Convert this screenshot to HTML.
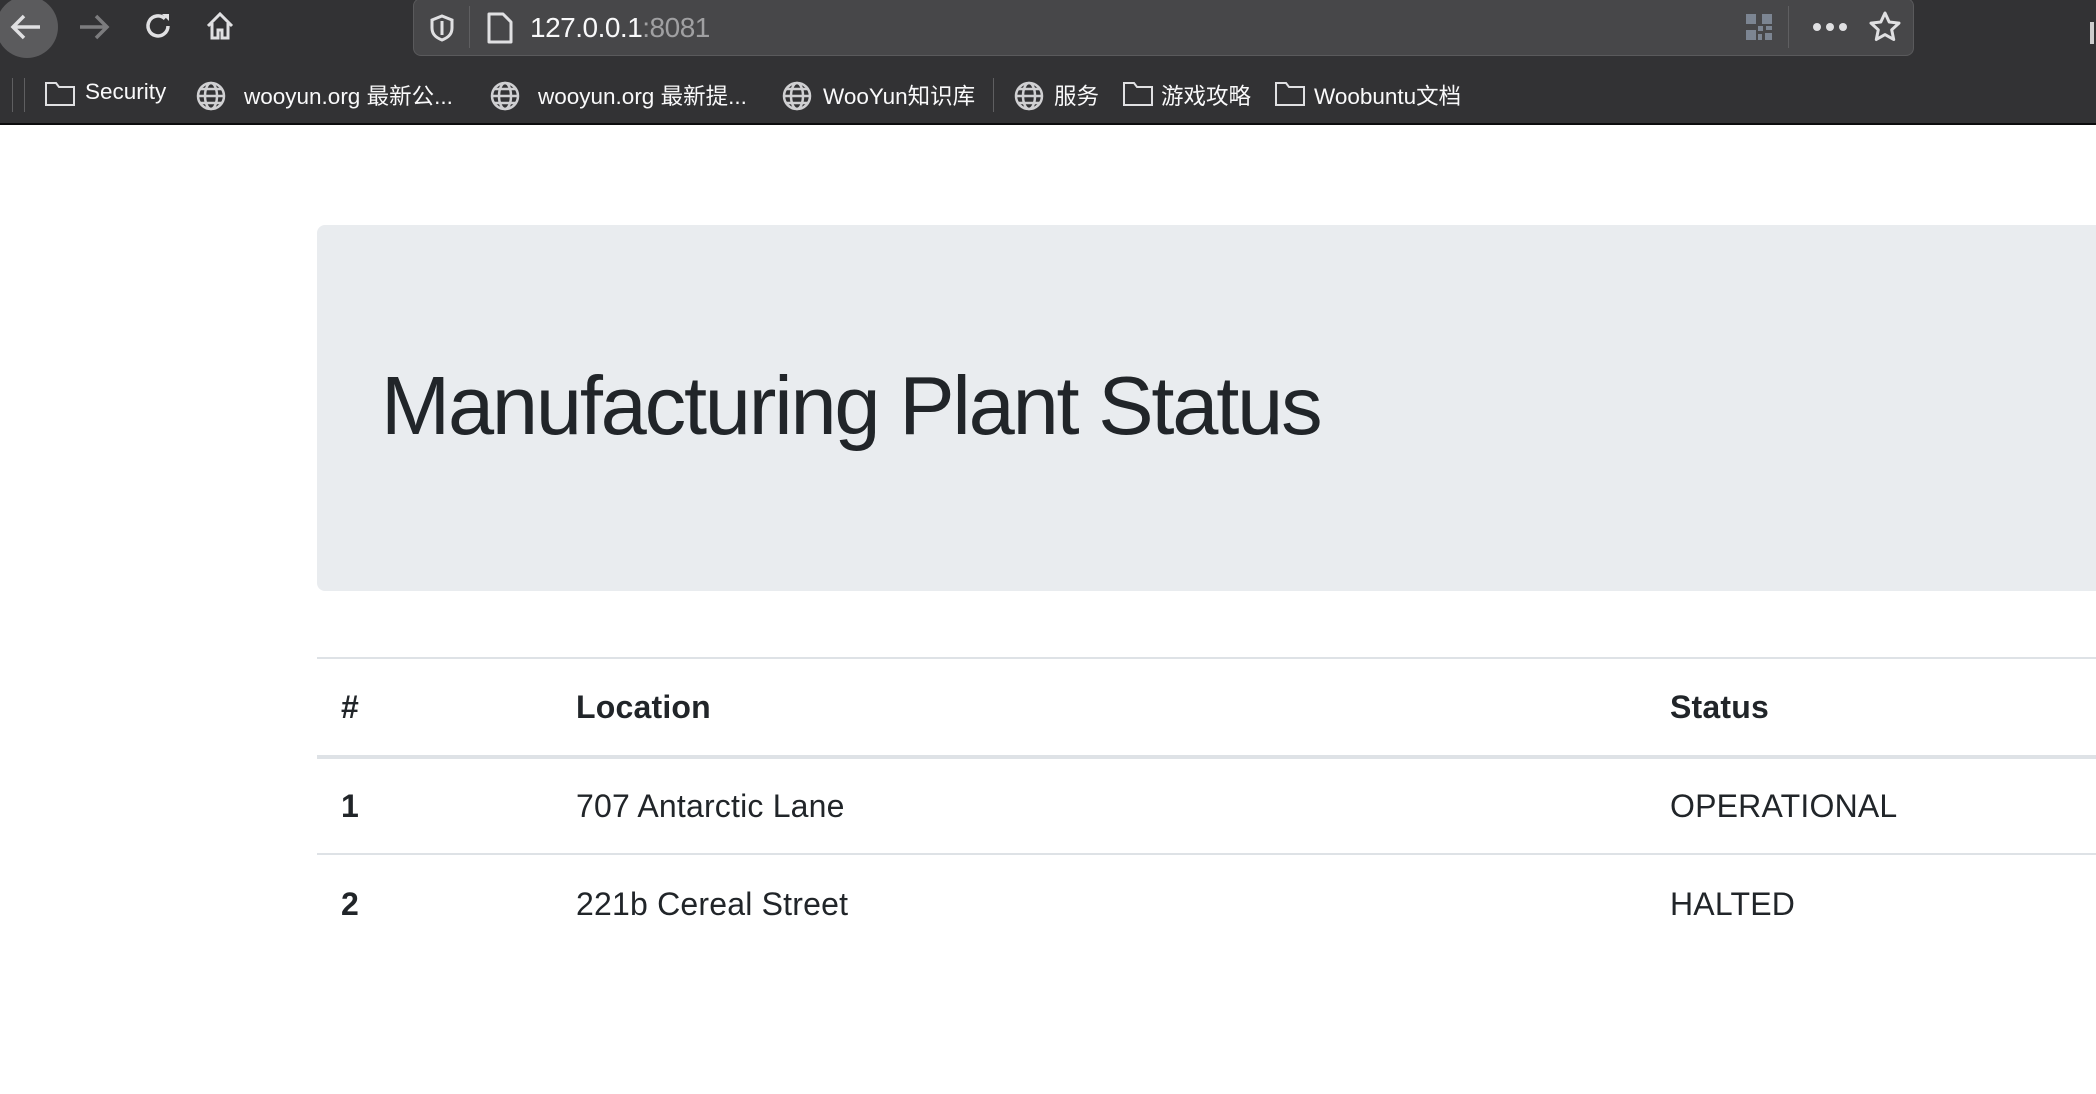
<!DOCTYPE html>
<html><head><meta charset="utf-8"><style>
*{margin:0;padding:0;box-sizing:border-box}
body{width:2096px;height:1094px;overflow:hidden;background:#fff;font-family:"Liberation Sans","Noto Sans CJK SC",sans-serif;color:#212529;position:relative}
.tb{position:absolute;left:0;top:0;width:2096px;height:123px;background:#323234}
.line{position:absolute;left:0;top:123px;width:2096px;height:2px;background:#0c0c0d}
.url{position:absolute;left:413px;top:-2px;width:1501px;height:58px;background:#474749;border:1px solid #5a5a5c;border-radius:8px}
.bm{position:absolute;top:79px;color:#f9f9fa;font-size:22.5px;white-space:nowrap}
.ic{position:absolute;color:#d0d0d2}
.jt{position:absolute;left:317px;top:225px;width:1800px;height:366px;background:#e9ecef;border-radius:8px}
h1{position:absolute;left:381px;top:356px;font-size:83px;font-weight:500;letter-spacing:-2.2px;line-height:100px;white-space:nowrap}
.hr{position:absolute;left:317px;width:1800px;background:#dee2e6}
.t{position:absolute;font-size:32px;line-height:40px;white-space:nowrap;letter-spacing:0.2px}
.b{font-weight:bold}
</style></head><body>
<div class="tb"></div><div class="line"></div>
<div style="position:absolute;left:-4px;top:-4px;width:62px;height:62px;border-radius:50%;background:#5b5b5d"></div>
<svg class="ic" style="left:8px;top:12px" width="36" height="30" viewBox="0 0 36 30"><path d="M32 15H6M16 4L5 15l11 11" stroke="#e0e0e2" stroke-width="3.5" fill="none"/></svg>
<svg class="ic" style="left:76px;top:12px" width="36" height="30" viewBox="0 0 36 30"><path d="M4 15h26M20 4l11 11-11 11" stroke="#7c7c7e" stroke-width="3.5" fill="none"/></svg>
<svg class="ic" style="left:142px;top:10px" width="32" height="32" viewBox="0 0 32 32"><path d="M26 16a10 10 0 1 1-3-7.2" stroke="#e0e0e2" stroke-width="3.5" fill="none"/><path d="M20 4h7v7z" fill="#e0e0e2"/></svg>
<svg class="ic" style="left:204px;top:10px" width="32" height="32" viewBox="0 0 32 32"><path d="M4 16L16 4l12 12M8 13v15h6v-8h4v8h6V13" stroke="#e0e0e2" stroke-width="3" fill="none"/></svg>
<div class="url"></div>
<svg style="position:absolute;left:428px;top:14px" width="28" height="28" viewBox="0 0 28 28"><path d="M14 2l10 4v8c0 7-5 10-10 12C9 24 4 21 4 14V6z" stroke="#e0e0e2" stroke-width="3" fill="none"/><path d="M14 7v14" stroke="#e0e0e2" stroke-width="3"/></svg>
<div style="position:absolute;left:469px;top:6px;width:1px;height:42px;background:#5f5f61"></div>
<svg style="position:absolute;left:486px;top:11px" width="28" height="34" viewBox="0 0 28 34"><path d="M3 3h14l8 8v20H3z" stroke="#e0e0e2" stroke-width="3" fill="none" stroke-linejoin="round"/></svg>
<div style="position:absolute;left:530px;top:12px;font-size:28px;color:#f9f9fa;letter-spacing:-0.5px">127.0.0.1<span style="color:#a0a0a2">:8081</span></div>
<svg style="position:absolute;left:1746px;top:14px" width="26" height="26" viewBox="0 0 26 26" fill="#7c8592"><rect x="0" y="0" width="10" height="10"/><rect x="16" y="0" width="10" height="10"/><rect x="0" y="16" width="10" height="10"/><rect x="12" y="12" width="5" height="5"/><rect x="19" y="19" width="7" height="7"/><rect x="12" y="20" width="4" height="6"/><rect x="20" y="12" width="6" height="4"/></svg>
<div style="position:absolute;left:1788px;top:6px;width:1px;height:42px;background:#5f5f61"></div>
<svg style="position:absolute;left:1812px;top:22px" width="36" height="10" viewBox="0 0 36 10" fill="#e0e0e2"><circle cx="5" cy="5" r="4"/><circle cx="18" cy="5" r="4"/><circle cx="31" cy="5" r="4"/></svg>
<svg style="position:absolute;left:1868px;top:10px" width="34" height="34" viewBox="0 0 34 34"><path d="M17 3l4.2 9 9.8 1.1-7.3 6.7 2 9.7L17 24.6l-8.7 4.9 2-9.7L3 13.1l9.8-1.1z" stroke="#e0e0e2" stroke-width="3" fill="none" stroke-linejoin="round"/></svg>
<div style="position:absolute;left:12px;top:78px;width:1px;height:34px;background:#5f5f61"></div>
<div style="position:absolute;left:24px;top:78px;width:1px;height:34px;background:#5f5f61"></div>
<div style="position:absolute;left:993px;top:78px;width:1px;height:34px;background:#5f5f61"></div>
<svg style="position:absolute;left:44px;top:81px" width="32" height="26" viewBox="0 0 32 26"><path d="M2 2h10l3 4h15v18H2z" stroke="#e0e0e2" stroke-width="2" fill="none"/></svg>
<div class="bm" style="left:85px">Security</div>
<svg style="position:absolute;left:195px;top:80px" width="32" height="32" viewBox="0 0 32 32" fill="none" stroke="#d0d0d2" stroke-width="2.5"><circle cx="16" cy="16" r="13"/><ellipse cx="16" cy="16" rx="6" ry="13"/><path d="M3 16h26M5 9h22M5 23h22"/></svg>
<div class="bm" style="left:244px">wooyun.org 最新公...</div>
<svg style="position:absolute;left:489px;top:80px" width="32" height="32" viewBox="0 0 32 32" fill="none" stroke="#d0d0d2" stroke-width="2.5"><circle cx="16" cy="16" r="13"/><ellipse cx="16" cy="16" rx="6" ry="13"/><path d="M3 16h26M5 9h22M5 23h22"/></svg>
<div class="bm" style="left:538px">wooyun.org 最新提...</div>
<svg style="position:absolute;left:781px;top:80px" width="32" height="32" viewBox="0 0 32 32" fill="none" stroke="#d0d0d2" stroke-width="2.5"><circle cx="16" cy="16" r="13"/><ellipse cx="16" cy="16" rx="6" ry="13"/><path d="M3 16h26M5 9h22M5 23h22"/></svg>
<div class="bm" style="left:823px">WooYun知识库</div>
<svg style="position:absolute;left:1013px;top:80px" width="32" height="32" viewBox="0 0 32 32" fill="none" stroke="#d0d0d2" stroke-width="2.5"><circle cx="16" cy="16" r="13"/><ellipse cx="16" cy="16" rx="6" ry="13"/><path d="M3 16h26M5 9h22M5 23h22"/></svg>
<div class="bm" style="left:1054px">服务</div>
<svg style="position:absolute;left:1122px;top:81px" width="32" height="26" viewBox="0 0 32 26"><path d="M2 2h10l3 4h15v18H2z" stroke="#e0e0e2" stroke-width="2" fill="none"/></svg>
<div class="bm" style="left:1161px">游戏攻略</div>
<svg style="position:absolute;left:1274px;top:81px" width="32" height="26" viewBox="0 0 32 26"><path d="M2 2h10l3 4h15v18H2z" stroke="#e0e0e2" stroke-width="2" fill="none"/></svg>
<div class="bm" style="left:1314px">Woobuntu文档</div>
<div style="position:absolute;left:2090px;top:22px;width:4px;height:22px;background:#ccc"></div>

<div class="jt"></div>
<h1>Manufacturing Plant Status</h1>
<div class="hr" style="top:657px;height:2px"></div>
<div class="hr" style="top:755px;height:4px"></div>
<div class="hr" style="top:853px;height:2px"></div>
<div class="t b" style="left:341px;top:687px">#</div>
<div class="t b" style="left:576px;top:687px">Location</div>
<div class="t b" style="left:1670px;top:687px">Status</div>
<div class="t b" style="left:341px;top:786px">1</div>
<div class="t" style="left:576px;top:786px">707 Antarctic Lane</div>
<div class="t" style="left:1670px;top:786px">OPERATIONAL</div>
<div class="t b" style="left:341px;top:884px">2</div>
<div class="t" style="left:576px;top:884px">221b Cereal Street</div>
<div class="t" style="left:1670px;top:884px">HALTED</div>
</body></html>
